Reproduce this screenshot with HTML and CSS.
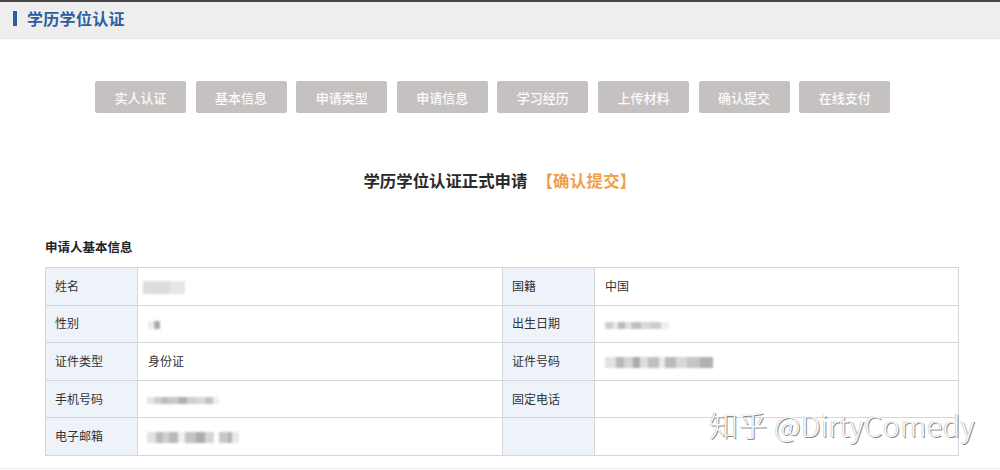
FILE: index.html
```html
<!DOCTYPE html>
<html lang="zh-CN">
<head>
<meta charset="utf-8">
<title>学历学位认证</title>
<link rel="stylesheet" href="styles.css">
</head>
<body>
<div class="page">
  <header class="topbar">
    <span class="topbar-mark"></span>
    <h1 class="topbar-title">学历学位认证</h1>
  </header>

  <nav class="steps">
    <span class="step">实人认证</span>
    <span class="step">基本信息</span>
    <span class="step">申请类型</span>
    <span class="step">申请信息</span>
    <span class="step">学习经历</span>
    <span class="step">上传材料</span>
    <span class="step">确认提交</span>
    <span class="step">在线支付</span>
  </nav>

  <h2 class="form-title">学历学位认证正式申请<span class="form-stage">【确认提交】</span></h2>

  <section class="info">
    <h3 class="info-title">申请人基本信息</h3>
    <table class="info-table">
      <colgroup>
        <col class="c-label"><col class="c-value"><col class="c-label"><col class="c-value2">
      </colgroup>
      <tr>
        <th>姓名</th>
        <td><span class="mosaic mosaic-name"></span></td>
        <th>国籍</th>
        <td>中国</td>
      </tr>
      <tr>
        <th>性别</th>
        <td><span class="mosaic mosaic-sex"></span></td>
        <th>出生日期</th>
        <td><span class="mosaic mosaic-birth"></span></td>
      </tr>
      <tr>
        <th>证件类型</th>
        <td>身份证</td>
        <th>证件号码</th>
        <td><span class="mosaic mosaic-id"></span></td>
      </tr>
      <tr>
        <th>手机号码</th>
        <td><span class="mosaic mosaic-phone"></span></td>
        <th>固定电话</th>
        <td></td>
      </tr>
      <tr>
        <th>电子邮箱</th>
        <td><span class="mosaic mosaic-mail"></span></td>
        <th></th>
        <td></td>
      </tr>
    </table>
  </section>

  <div class="bottom-line"></div>
  <div class="watermark">知乎 @DirtyComedy</div>
</div>
</body>
</html>
```

FILE: styles.css
```css
* { box-sizing: border-box; }
html, body {
  margin: 0;
  padding: 0;
  background: #ffffff;
}
body {
  font-family: "Noto Sans CJK SC", "Noto Sans", sans-serif;
  color: #333;
}
.page {
  position: relative;
  width: 1000px;
  height: 470px;
  overflow: hidden;
}
.topbar {
  display: flex;
  align-items: center;
  height: 39px;
  border-top: 2px solid #474747;
  background: #eeeeee;
  border-bottom: 1px solid #e9e9e9;
  padding-left: 13px;
  padding-bottom: 4px;
}
.topbar-mark {
  width: 4px;
  height: 15px;
  background: #2c5e9e;
  margin-right: 10px;
}
.topbar-title {
  margin: 0;
  font-size: 16px;
  font-weight: 700;
  color: #2c5e9e;
  line-height: 1;
  letter-spacing: 0.3px;
}
.steps {
  display: flex;
  gap: 9.6px;
  padding-left: 95px;
  margin-top: 42px;
}
.step {
  width: 91px;
  height: 32px;
  display: flex;
  align-items: center;
  justify-content: center;
  background: #c5c1c1;
  border-radius: 2px;
  color: #fbfbfb;
  font-size: 13px;
  font-weight: 500;
}
.form-title {
  margin: 56px 0 0 0;
  text-align: center;
  font-size: 16.4px;
  font-weight: 700;
  color: #2a2a2a;
  line-height: 22px;
  padding-left: 0;
}
.form-stage {
  color: #f0a04b;
  margin-left: 9px;
  letter-spacing: 0.3px;
}
.info {
  padding-left: 45px;
  margin-top: 48px;
}
.info-title {
  margin: 0;
  font-size: 12.5px;
  font-weight: 700;
  color: #222;
  line-height: 16px;
}
.info-table {
  margin-top: 12px;
  width: 913px;
  border-collapse: collapse;
  table-layout: fixed;
  font-size: 12px;
}
.c-label { width: 92px; }
.c-value { width: 365px; }
.c-value2 { width: 364px; }
.info-table th,
.info-table td {
  height: 37.6px;
  border: 1px solid #d5d6da;
  text-align: left;
  vertical-align: middle;
  font-weight: 400;
  color: #333;
  padding: 0 0 2px 0;
}
.info-table th {
  background: #eef2f9;
  padding-left: 9px;
}
.info-table td {
  background: #fff;
  padding-left: 10px;
}
.mosaic {
  display: inline-block;
  vertical-align: middle;
  filter: blur(0.8px);
}
.mosaic-name {
  width: 42px;
  height: 13px;
  margin-left: -5px;
  background: linear-gradient(90deg, #dcdcdc 0 64%, #e6e6e6 64% 100%);
}
.mosaic-sex {
  width: 12px;
  height: 8px;
  margin-left: 0;
  background: linear-gradient(90deg, #ececec 0 40%, #fff 40% 50%, #a9a9a9 50% 100%);
}
.mosaic-phone {
  width: 72px;
  height: 7px;
  margin-left: -1px;
  background: linear-gradient(90deg, #e4e4e4 0 10%, #cfcfcf 10% 20%, #bdbdbd 20% 30%, #c8c8c8 30% 45%, #b0b0b0 45% 55%, #cfcfcf 55% 70%, #d9d9d9 70% 80%, #c2c2c2 80% 92%, #efefef 92% 100%);
}
.mosaic-mail {
  width: 112px;
  height: 11px;
  margin-left: -1px;
  background: linear-gradient(90deg, #e2e2e2 0 8%, #bcbcbc 8% 14%, #d0d0d0 14% 20%, #b9b9b9 20% 28%, #f0f0f0 28% 34%, #c4c4c4 34% 44%, #adadad 44% 52%, #d6d6d6 52% 60%, #fff 60% 64%, #c8c8c8 64% 72%, #b5b5b5 72% 76%, #e8e8e8 76% 82%, #fff 82% 100%);
}
.mosaic-birth {
  width: 64px;
  height: 7px;
  background: linear-gradient(90deg, #cfcfcf 0 12%, #e9e9e9 12% 20%, #b9b9b9 20% 32%, #e0e0e0 32% 42%, #bdbdbd 42% 56%, #d8d8d8 56% 70%, #cccccc 70% 88%, #efefef 88% 100%);
}
.mosaic-id {
  width: 108px;
  height: 11px;
  background: linear-gradient(90deg, #e2e2e2 0 10%, #b8b8b8 10% 18%, #d4d4d4 18% 26%, #aaaaaa 26% 32%, #dedede 32% 40%, #c0c0c0 40% 50%, #ebebeb 50% 56%, #bababa 56% 66%, #d8d8d8 66% 76%, #c5c5c5 76% 88%, #b0b0b0 88% 100%);
}
.bottom-line {
  position: absolute;
  left: 0;
  right: 0;
  top: 468px;
  height: 1px;
  background: #ececec;
}
.watermark {
  position: absolute;
  right: 25px;
  top: 404px;
  font-family: "Noto Sans CJK SC", "Noto Sans", sans-serif;
  font-size: 29px;
  font-weight: 300;
  color: #fafafa;
  text-shadow: 1px 1px 0 #8c8c8c, -0.5px -0.5px 0 #bdbdbd;
  letter-spacing: 0.3px;
  line-height: 40px;
}
```
